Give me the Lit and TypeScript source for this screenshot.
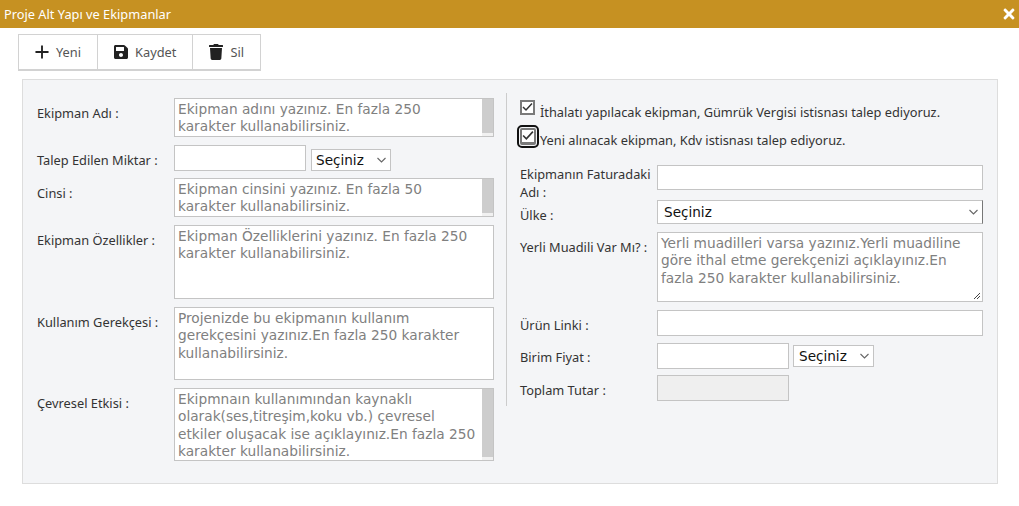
import { LitElement, html, css, svg } from 'lit';
import { customElement } from 'lit/decorators.js';

const icons = {
  plus: svg`<svg class="ico" viewBox="-.5 -1.5 15 17"><path d="M6 0h2v6h6v2H8v6H6V8H0V6h6z"/></svg>`,
  save: svg`<svg class="ico" viewBox="0 0 448 512"><path d="M433.941 129.941l-83.882-83.882A48 48 0 0 0 316.118 32H48C21.49 32 0 53.49 0 80v352c0 26.51 21.49 48 48 48h352c26.51 0 48-21.49 48-48V163.882a48 48 0 0 0-14.059-33.941zM224 416c-35.346 0-64-28.654-64-64 0-35.346 28.654-64 64-64s64 28.654 64 64c0 35.346-28.654 64-64 64zm96-304.52V212c0 6.627-5.373 12-12 12H76c-6.627 0-12-5.373-12-12V108c0-6.627 5.373-12 12-12h228.52c3.183 0 6.235 1.264 8.485 3.515l3.48 3.48A11.996 11.996 0 0 1 320 111.48z"/></svg>`,
  trash: svg`<svg class="ico" viewBox="0 0 448 512"><path d="M432 32H312l-9.4-18.7A24 24 0 0 0 281.1 0H166.8a23.72 23.72 0 0 0-21.4 13.3L136 32H16A16 16 0 0 0 0 48v32a16 16 0 0 0 16 16h416a16 16 0 0 0 16-16V48a16 16 0 0 0-16-16zM53.2 467a48 48 0 0 0 47.9 45h245.8a48 48 0 0 0 47.9-45L416 128H32z"/></svg>`,
  close: svg`<svg class="close" viewBox="0 0 352 512"><path d="M242.72 256l100.07-100.07c12.28-12.28 12.28-32.19 0-44.48l-22.24-22.24c-12.28-12.28-32.19-12.28-44.48 0L176 189.28 75.93 89.21c-12.28-12.28-32.19-12.28-44.48 0L9.21 111.45c-12.28 12.28-12.28 32.19 0 44.48L109.28 256 9.21 356.07c-12.28 12.28-12.28 32.19 0 44.48l22.24 22.24c12.28 12.28 32.2 12.28 44.48 0L176 322.72l100.07 100.07c12.28 12.28 32.2 12.28 44.48 0l22.24-22.24c12.28-12.28 12.28-32.19 0-44.48L242.72 256z"/></svg>`,
};

const checkMark = svg`<svg viewBox="0 0 11 11"><path d="M1 5l3 3L10 1.5" fill="none" stroke="#333" stroke-width="1.5"/></svg>`;

@customElement('app-root')
export class AppRoot extends LitElement {
  static styles = css`
    :host {
      display: block;
      width: 1019px;
      height: 506px;
      background: #fff;
      font-family: "Noto Sans", sans-serif;
      font-size: 12.8px;
      color: #333;
      overflow: hidden;
    }
    .title {
      height: 28px;
      background: #c69122;
      color: #fff;
      display: flex;
      align-items: center;
      justify-content: space-between;
      padding: 0 4px;
    }
    .close { width: 12px; height: 16px; fill: #fff; }
    .toolbar {
      display: inline-flex;
      margin: 6px 0 0 18px;
      border: 1px solid #d2d2d2;
      border-bottom-width: 2px;
      height: 34px;
      vertical-align: top;
    }
    .tool {
      display: flex;
      align-items: center;
      gap: 7px;
      padding: 0 16px;
      border-right: 1px solid #d2d2d2;
      color: #555;
    }
    .tool:last-child { border-right: none; }
    .ico { width: 14px; height: 16px; fill: #222; }
    .panel {
      box-sizing: border-box;
      margin: 8px 0 0 22px;
      width: 976px;
      height: 405px;
      background: #f4f5f7;
      border: 1px solid #ddd;
      display: flex;
      padding: 13px 0 0 14px;
    }
    .left { width: 457px; padding-top: 5px; }
    .right {
      width: 477px;
      margin-left: 12px;
      border-left: 1px solid #ccc;
      height: 313px;
      padding-left: 13px;
      box-sizing: border-box;
    }
    .row { display: flex; align-items: flex-start; margin-bottom: 8px; }
    .country { height: 24px; }
    .lbl { width: 137px; flex: none; line-height: 16px; padding-top: 7px; }
    .right .lbl { padding-top: 7px; line-height: 17.5px; }
    .area {
      display: flex;
      box-sizing: border-box;
      width: 320px;
      border: 1px solid #c4c4c4;
      background: #fff;
    }
    .area textarea {
      flex: 1;
      min-width: 0;
      border: none;
      outline: none;
      resize: none;
      overflow: hidden;
      padding: 2px 3px 0;
      margin: 0;
      font-family: "DejaVu Sans", sans-serif;
      font-size: 13.72px;
      line-height: 17.3px;
      background: #fff;
    }
    .area textarea::placeholder { color: #808080; opacity: 1; }
    .sb { width: 11px; flex: none; background: #f1f1f1; padding-bottom: 3px; }
    .sb i { display: block; height: 100%; background: #cdcdcd; }
    .grip { position: relative; }
    .grip svg { position: absolute; right: 1px; bottom: 1px; width: 9px; height: 9px; }
    input.txt {
      box-sizing: border-box;
      border: 1px solid #c4c4c4;
      background: #fff;
      outline: none;
      padding: 0 3px;
      margin: 0;
      height: 26px;
    }
    input.txt:disabled { background: #efefef; }
    select {
      appearance: none;
      box-sizing: border-box;
      border: 1px solid #c4c4c4;
      background-color: #fff;
      background-image: url("data:image/svg+xml,%3Csvg xmlns='http://www.w3.org/2000/svg' width='9' height='6'%3E%3Cpath d='M.5 1l4 4 4-4' fill='none' stroke='%23666' stroke-width='1.1'/%3E%3C/svg%3E");
      background-repeat: no-repeat;
      background-position: right 4px center;
      font-family: "DejaVu Sans", sans-serif;
      font-size: 13.6px;
      color: #111;
      height: 22px;
      margin: 4px 0 0 5px;
      width: 80px;
      padding: 0 0 0 4px;
      border-radius: 0;
    }
    .wide { width: 326px; }
    .short { width: 132px; }
    select.full { width: 326px; height: 24px; margin: 0; border-right-color: #777; padding-left: 6px; }
    select.unit { margin: 2px 0 0 4px; width: 81px; padding-left: 5px; }
    .check { display: flex; align-items: flex-start; height: 21px; margin-top: 7px; }
    .check .text { margin-top: 3px; line-height: 18px; }
    .box {
      box-sizing: border-box;
      width: 15px;
      height: 15px;
      flex: none;
      margin-right: 5px;
      border: 2px solid #7a7a7a;
      background: #fff;
    }
    .box svg { display: block; width: 100%; height: 100%; }
    .focus {
      width: 16px;
      height: 17px;
      margin-right: 4px;
      border-bottom-width: 3px;
      outline: 2px solid #111;
      outline-offset: 1px;
      border-radius: 2px;
    }
  `;

  private _area(text: string, h: number, scroll = true) {
    return html`<div class="area" style="height:${h}px">
      <textarea placeholder=${text}></textarea>
      ${scroll ? html`<div class="sb"><i></i></div>` : ''}
    </div>`;
  }

  render() {
    return html`
      <div class="title"><span>Proje Alt Yapı ve Ekipmanlar</span>${icons.close}</div>
      <div class="toolbar">
        <div class="tool">${icons.plus}Yeni</div>
        <div class="tool">${icons.save}Kaydet</div>
        <div class="tool">${icons.trash}Sil</div>
      </div>
      <div class="panel">
        <div class="left">
          <div class="row"><div class="lbl">Ekipman Adı :</div>
            ${this._area('Ekipman adını yazınız. En fazla 250 karakter kullanabilirsiniz.', 39)}</div>
          <div class="row"><div class="lbl">Talep Edilen Miktar :</div>
            <input class="txt short" /><select><option>Seçiniz</option></select></div>
          <div class="row" style="margin-top:-1px"><div class="lbl">Cinsi :</div>
            ${this._area('Ekipman cinsini yazınız. En fazla 50 karakter kullanabilirsiniz.', 39)}</div>
          <div class="row"><div class="lbl">Ekipman Özellikler :</div>
            ${this._area('Ekipman Özelliklerini yazınız. En fazla 250 karakter kullanabilirsiniz.', 74, false)}</div>
          <div class="row"><div class="lbl">Kullanım Gerekçesi :</div>
            ${this._area('Projenizde bu ekipmanın kullanım gerekçesini yazınız.En fazla 250 karakter kullanabilirsiniz.', 73, false)}</div>
          <div class="row"><div class="lbl">Çevresel Etkisi :</div>
            ${this._area('Ekipmnaın kullanımından kaynaklı olarak(ses,titreşim,koku vb.) çevresel etkiler oluşacak ise açıklayınız.En fazla 250 karakter kullanabilirsiniz.', 73)}</div>
        </div>
        <div class="right">
          <div class="check">
            <span class="box">${checkMark}</span><span class="text">İthalatı yapılacak ekipman, Gümrük Vergisi istisnası talep ediyoruz.</span>
          </div>
          <div class="check">
            <span class="box focus">${checkMark}</span><span class="text">Yeni alınacak ekipman, Kdv istisnası talep ediyoruz.</span>
          </div>
          <div class="row" style="margin-top:16px;margin-bottom:-1px"><div class="lbl" style="padding-top:1px">Ekipmanın Faturadaki Adı :</div><input class="txt wide" style="height:25px" /></div>
          <div class="row country"><div class="lbl">Ülke :</div><select class="full"><option>Seçiniz</option></select></div>
          <div class="row"><div class="lbl">Yerli Muadili Var Mı? :</div>
            <div class="area wide grip" style="height:70px">
              <textarea placeholder="Yerli muadilleri varsa yazınız.Yerli muadiline göre ithal etme gerekçenizi açıklayınız.En fazla 250 karakter kullanabilirsiniz."></textarea>
              <svg viewBox="0 0 9 9"><path d="M8 2L2 8M8 5L5 8" stroke="#444" fill="none"/></svg>
            </div></div>
          <div class="row" style="margin-bottom:7px"><div class="lbl">Ürün Linki :</div><input class="txt wide" /></div>
          <div class="row" style="margin-bottom:6px"><div class="lbl" style="padding-top:6px">Birim Fiyat :</div>
            <input class="txt short" /><select class="unit"><option>Seçiniz</option></select></div>
          <div class="row"><div class="lbl">Toplam Tutar :</div><input class="txt short" disabled /></div>
        </div>
      </div>
    `;
  }
}
